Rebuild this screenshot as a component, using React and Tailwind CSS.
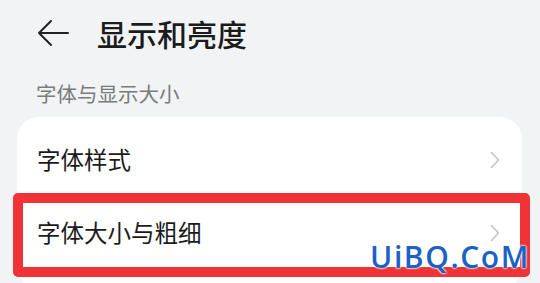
import React from "react";

const cjk = { fontFamily: '"Noto Sans CJK SC", "Noto Sans", sans-serif' };

function Chevron() {
  return (
    <svg width="10" height="18" viewBox="0 0 10 18" fill="none">
      <path d="M1.5 1.5 L8.5 9 L1.5 16.5" stroke="#c4c4c4" strokeWidth="1.6" strokeLinecap="round" strokeLinejoin="round" />
    </svg>
  );
}

export default function App() {
  return (
    <div className="relative w-[540px] h-[283px] overflow-hidden bg-[#f1f3f5]" style={cjk}>
      <div className="flex items-center h-[32px] mt-[17px] pl-[37px]">
        <svg width="32" height="28" viewBox="0 0 32 28" fill="none">
          <path d="M14 2 L2 14 L14 26 M2 14 H31" stroke="#222" strokeWidth="2" strokeLinecap="round" strokeLinejoin="round" />
        </svg>
        <span className="ml-[28px] text-[30px] leading-none font-medium text-[#1b1b1b]">显示和亮度</span>
      </div>
      <div className="mt-[32px] h-[24px] flex items-center pl-[36px] text-[20.5px] leading-none text-[#7b7b7b]">
        字体与显示大小
      </div>
      <div className="mt-[12px] ml-[17px] w-[505px] bg-white rounded-[22px] pt-[6px] pb-[20px]">
        <div className="h-[73px] flex items-center justify-between pl-[20px] pr-[22px]">
          <span className="text-[23.5px] leading-none text-[#1b1b1b]">字体样式</span>
          <Chevron />
        </div>
        <div className="h-[73px] flex items-center justify-between pl-[20px] pr-[22px]">
          <span className="text-[23.5px] leading-none text-[#1b1b1b]">字体大小与粗细</span>
          <Chevron />
        </div>
      </div>
      <div className="absolute left-[13px] top-[193px] w-[517px] h-[84px] border-[10px] border-[#ef3337] rounded-[5px]" />
      <div
        className="absolute left-[370px] top-[238px] text-[30px] leading-[38px] tracking-[1.6px] font-semibold text-[#1c61c6]"
        style={{ fontFamily: '"Open Sans", sans-serif', textShadow: "0 0 2px #fff, 0 0 2px #fff, 0 0 2px #fff" }}
      >
        UiBQ.CoM
      </div>
    </div>
  );
}
